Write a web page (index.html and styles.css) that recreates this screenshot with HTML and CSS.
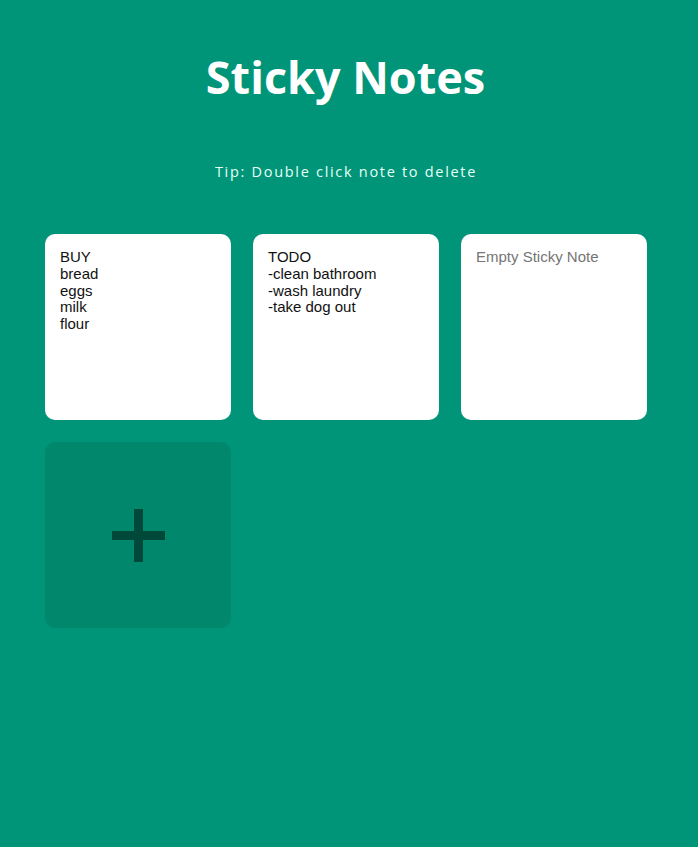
FILE: index.html
```html
<!DOCTYPE html>
<html>
<head>
<meta charset="utf-8">
<link rel="stylesheet" href="styles.css">
</head>
<body>
<h1 class="title">Sticky Notes</h1>
<p class="tip">Tip: Double click note to delete</p>
<div class="notes">
  <textarea class="note">BUY
bread
eggs
milk
flour</textarea>
  <textarea class="note">TODO
-clean bathroom
-wash laundry
-take dog out</textarea>
  <textarea class="note" placeholder="Empty Sticky Note"></textarea>
  <button class="add-note" type="button"><svg width="53" height="53" viewBox="0 0 53 53"><rect x="0" y="22" width="53" height="9" fill="#00493a"/><rect x="22" y="0" width="9" height="53" fill="#00493a"/></svg></button>
</div>
</body>
</html>
```
FILE: styles.css
```css
html, body {
  margin: 0;
  padding: 0;
}
body {
  background: #009578;
  font-family: "Open Sans", "Noto Sans", sans-serif;
  min-height: 847px;
}
.title {
  margin: 0;
  padding: 47px 7px 0 0;
  text-align: center;
  color: #ffffff;
  font-size: 45px;
  font-weight: 700;
  line-height: 60px;
}
.tip {
  margin: 55px 0 0;
  padding-right: 6px;
  text-align: center;
  color: #e6fff7;
  font-size: 14.5px;
  letter-spacing: 1.7px;
  line-height: 20px;
}
.notes {
  display: grid;
  grid-template-columns: repeat(3, 186px);
  grid-auto-rows: 186px;
  gap: 22px;
  padding: 52px 0 0 45px;
}
.note {
  box-sizing: border-box;
  width: 186px;
  height: 186px;
  margin: 0;
  padding: 15px;
  border: none;
  border-radius: 10px;
  background: #ffffff;
  font-family: "Liberation Sans", Arial, sans-serif;
  font-size: 15px;
  line-height: 16.8px;
  color: #111;
  resize: none;
  outline: none;
  overflow: hidden;
}
.note::placeholder {
  color: #757575;
}
.add-note {
  width: 186px;
  height: 186px;
  margin: 0;
  padding: 0;
  border: none;
  border-radius: 10px;
  background: #00876c;
  display: flex;
  align-items: center;
  justify-content: center;
  cursor: pointer;
}
.add-note svg {
  display: block;
}
```
